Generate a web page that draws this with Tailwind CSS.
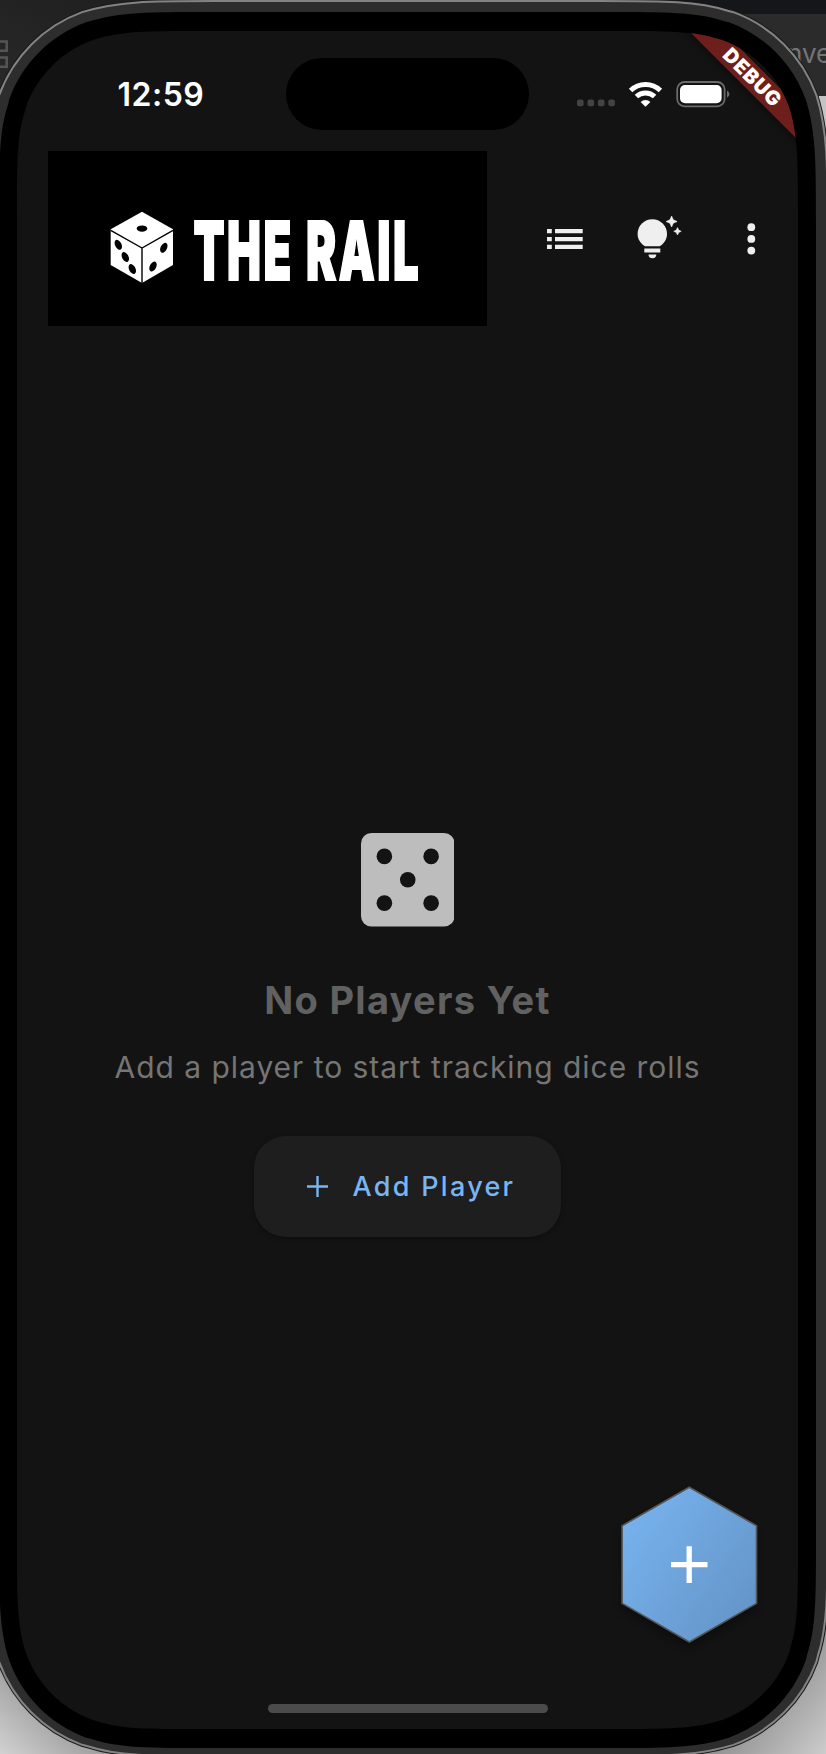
<!DOCTYPE html>
<html lang="en">
<head>
<meta charset="utf-8">
<title>The Rail</title>
<script src="https://cdn.jsdelivr.net/npm/@tailwindcss/browser@4"></script>
</head>
<body class="bg-[#1f1f1f] font-['Inter','Liberation_Sans',sans-serif]">
<div class="relative w-[826px] h-[1754px] overflow-hidden">

  <!-- Desktop and device frame -->
  <svg class="absolute inset-0" width="826" height="1754" viewBox="0 0 826 1754">
    <defs>
      <linearGradient id="tl" x1="0" y1="1" x2="1" y2="0"><stop offset="0" stop-color="#303030"/><stop offset="1" stop-color="#161616"/></linearGradient>
      <linearGradient id="bl" x1="0" y1="1" x2="1" y2="0"><stop offset="0" stop-color="#d2d2d2"/><stop offset=".55" stop-color="#808080"/><stop offset="1" stop-color="#606060"/></linearGradient>
      <linearGradient id="br" x1="1" y1="1" x2="0" y2="0"><stop offset="0" stop-color="#cccccc"/><stop offset=".55" stop-color="#808080"/><stop offset="1" stop-color="#606060"/></linearGradient>
      <clipPath id="screenClip"><path data-box="17,31,781,1698,120"/></clipPath>
      <filter id="rs" x="-20%" y="-20%" width="140%" height="140%"><feGaussianBlur stdDeviation="5"/></filter>
    </defs>
    <rect width="413" height="200" fill="url(#tl)"/>
    <rect x="413" width="413" height="14" fill="#14161a"/>
    <rect x="413" y="14" width="413" height="82" fill="#2b2b2b"/>
    <rect x="700" y="96" width="126" height="1500" fill="#c4c4c4"/>
    <rect y="1620" width="150" height="134" fill="url(#bl)"/>
    <rect x="690" y="1590" width="136" height="164" fill="url(#br)"/>
    <g fill="none" stroke="#555" stroke-width="2.5"><path d="M0 41.5h6.7v9.2H0M0 57.5h6.7v9.2H0"/></g>
    <text x="787" y="62.5" font-size="26" fill="#757575">nve</text>
    <path data-box="-13,0,841.5,1757,150" fill="#2d2d2d" stroke="#1a1a1a" stroke-width="2"/>
    <path data-box="-12,1,839.5,1755,149" fill="#2d2d2d" stroke="#838383" stroke-width="2"/>
    <path data-box="-1,12,817,1736,138" fill="#000"/>
    <path data-box="17,31,781,1698,120" fill="#131313"/>
    <g clip-path="url(#screenClip)">
      <path d="M675 17L825 167L859 167L709 17Z" fill="#000" opacity=".5" filter="url(#rs)"/>
      <path d="M675 17L825 167L859 167L709 17Z" fill="#6e1f1c"/>
      <path d="M709 17L859 167V17Z" fill="#111"/>
      <text transform="translate(752.4 77) rotate(45)" x="0" y="7.3" text-anchor="middle" font-size="20" font-weight="900" textLength="73" fill="#fff">DEBUG</text>
    </g>
  </svg>

  <!-- Screen -->
  <main class="relative ml-[17px] w-[781px] pt-[31px] h-[1729px] flex flex-col">
    <header class="flex h-[120px] shrink-0 pt-[27px]">
      <div class="w-[268.5px] pl-[100.5px] pt-[13.5px] text-[32px] leading-[46px] font-semibold text-white tracking-[0.5px]">12:59</div>
      <div class="w-[243.5px] h-[71.5px] rounded-full bg-black"></div>
      <svg class="ml-[45.5px] mt-[20px]" width="158" height="32" viewBox="575 78 158 32">
        <g fill="#434343"><rect x="577" y="99.5" width="6.6" height="6.8" rx="2"/><rect x="587.5" y="99.5" width="6.6" height="6.8" rx="2"/><rect x="597.9" y="99.5" width="6.6" height="6.8" rx="2"/><rect x="608.3" y="99.5" width="6.6" height="6.8" rx="2"/></g>
        <g fill="none" stroke="#fff" stroke-width="4.9"><path d="M630.6 90.5a21.4 21.4 0 0 1 29.8 0"/><path d="M636.4 96.6a13.2 13.2 0 0 1 18.2 0"/></g>
        <path d="M645.5 106.8l-4.9-4.9a7 7 0 0 1 9.8 0z" fill="#fff"/>
        <rect x="677.2" y="82" width="47.4" height="24.4" rx="7.5" fill="none" stroke="#6b6b6b" stroke-width="1.8"/>
        <rect x="680" y="85" width="41.6" height="18.2" rx="5" fill="#fff"/>
        <path d="M727 90.6q2.4 1.2 2.4 3.6t-2.4 3.6z" fill="#6b6b6b"/>
      </svg>
    </header>

    <nav class="flex h-[176px] shrink-0 pl-[31px]">
      <div class="w-[439px] h-[175px] bg-black">
        <svg width="439" height="175" viewBox="48 151 439 175">
          <path d="M142 211.7L173 229.3V265L142 283L110.7 265V229.3Z" fill="#fff"/>
          <path d="M110.7 230.3L142 248L173 230.3M142 248V283" fill="none" stroke="#000" stroke-width="1.4"/>
          <g fill="#000">
            <ellipse cx="142" cy="228.6" rx="5.3" ry="3.2"/>
            <ellipse cx="118.3" cy="244.8" rx="3.2" ry="5.3" transform="rotate(-27 118.3 244.8)"/>
            <ellipse cx="125.3" cy="257" rx="3.2" ry="5.3" transform="rotate(-27 125.3 257)"/>
            <ellipse cx="132.3" cy="269" rx="3.2" ry="5.3" transform="rotate(-27 132.3 269)"/>
            <ellipse cx="163.8" cy="247.8" rx="3.2" ry="5.3" transform="rotate(27 163.8 247.8)"/>
            <ellipse cx="153" cy="266.5" rx="3.2" ry="5.3" transform="rotate(27 153 266.5)"/>
          </g>
          <text x="193.5" y="279.8" textLength="227.5" lengthAdjust="spacingAndGlyphs" letter-spacing="4.5" word-spacing="1" fill="#fff" stroke="#fff" stroke-width="2.2" font-size="81.5" font-weight="900">THE RAIL</text>
        </svg>
      </div>
      <svg width="294" height="175" viewBox="487 151 294 175" fill="#efefef">
        <path d="M547 229h4.8v4.2H547zM555 229h27.7v4.2H555zM547 237h4.8v4.2H547zM555 237h27.7v4.2H555zM547 244.7h4.8v4.2H547zM555 244.7h27.7v4.2H555z"/>
        <path d="M645 246.3C640.5 243.5 637.6 239 637.6 233.9a14.7 14.7 0 0 1 29.4 0C667 239 664.1 243.5 659.7 246.3z"/>
        <path d="M644.3 248.6h16v4h-16zM648.5 254.6h7.8a3.9 3.6 0 0 1-7.8 0z"/>
        <path d="M671.6 216l1.7 3.8 3.8 1.7-3.8 1.7-1.7 3.8-1.7-3.8-3.8-1.7 3.8-1.7zM677.5 227.6l1.2 2.5 2.5 1.2-2.5 1.2-1.2 2.5-1.2-2.5-2.5-1.2 2.5-1.2z" stroke="#efefef" stroke-width=".6"/>
        <circle cx="751.3" cy="227.2" r="3.9"/><circle cx="751.3" cy="238.9" r="3.9"/><circle cx="751.3" cy="250.6" r="3.9"/>
      </svg>
    </nav>

    <section class="flex flex-col items-center pt-[506px] h-[1157px] shrink-0">
      <svg class="mr-[0.5px]" width="93.5" height="93.5" viewBox="3 3 18 18"><path fill="#bdbdbd" d="M19 3H5a2 2 0 0 0-2 2v14a2 2 0 0 0 2 2h14a2 2 0 0 0 2-2V5a2 2 0 0 0-2-2z"/><g fill="#131313"><circle cx="7.5" cy="7.5" r="1.5"/><circle cx="16.5" cy="7.5" r="1.5"/><circle cx="12" cy="12" r="1.5"/><circle cx="7.5" cy="16.5" r="1.5"/><circle cx="16.5" cy="16.5" r="1.5"/></g></svg>
      <h1 class="mt-[49.5px] text-[38px] leading-[48px] font-bold tracking-[1.3px] text-[#616161] whitespace-nowrap">No Players Yet</h1>
      <p class="mt-[23px] text-[30px] leading-[40px] tracking-[0.96px] text-[#757575] whitespace-nowrap">Add a player to start tracking dice rolls</p>
      <button class="mt-[49px] w-[307px] h-[101px] rounded-[32px] bg-[#1e1e1e] shadow-[0_2px_5px_rgba(0,0,0,0.3)] flex items-center pl-[53px] text-[#79b5f2]">
        <svg width="21" height="21" viewBox="0 0 21 21" stroke="currentColor" stroke-width="2.4"><path d="M10.5 0v21M0 10.5h21"/></svg>
        <span class="ml-[24.5px] pt-px text-[27px] font-medium tracking-[2.3px] whitespace-nowrap">Add Player</span>
      </button>
    </section>

    <div class="flex justify-end pr-[31px] h-[180px] shrink-0">
      <svg width="156" height="180" viewBox="611 1484 156 180">
        <defs><linearGradient id="hx" x1="0" y1=".1" x2="1" y2=".9"><stop offset="0" stop-color="#78b4f0"/><stop offset="1" stop-color="#6393c5"/></linearGradient>
        <filter id="hs" x="-20%" y="-20%" width="140%" height="140%"><feGaussianBlur stdDeviation="4"/></filter></defs>
        <path d="M689.3 1492l67 39v78l-67 39-67-39v-78z" fill="#000" opacity=".3" filter="url(#hs)"/>
        <path d="M689.3 1487.2l67.2 38.6v77.6l-67.2 38.6-67.2-38.6v-77.6z" fill="url(#hx)" stroke="#545759" stroke-width="1.6"/>
        <path d="M689.2 1546.3v36.6M671 1564.6h36.5" stroke="#fff" stroke-width="5.3"/>
      </svg>
    </div>
    <div class="mt-[39.5px] mx-auto w-[280px] h-[9.5px] shrink-0 rounded-full bg-[#4b4b4b]"></div>
  </main>
</div>
<script>
  // Builds continuous-curvature rounded rectangles from x, y, width, height, radius.
  document.querySelectorAll('path[data-box]').forEach(function (p) {
    var b = p.dataset.box.split(',').map(Number), x = b[0], y = b[1], w = b[2], h = b[3], r = b[4];
    var segs = [['c', .44017,0, .66026,0, .85873,.0655], ['l', .03844,.00942], ['c', .25867,.09415, .46243,.29791, .55658,.55658], ['c', .07491,.23691, .07491,.457, .07491,.89717]];
    function corner(t) {
      return segs.map(function (s) {
        var o = s[0];
        for (var i = 1; i < s.length; i += 2) {
          var u = s[i] * r, v = s[i + 1] * r;
          for (var k = 0; k < t; k++) { var q = u; u = -v; v = q; }
          o += ' ' + u.toFixed(2) + ' ' + v.toFixed(2);
        }
        return o;
      }).join('');
    }
    var e = 1.52866 * r;
    p.setAttribute('d', 'M' + (x + e) + ' ' + y + 'h' + (w - 2 * e) + corner(0) + 'v' + (h - 2 * e) + corner(1) + 'h' + (2 * e - w) + corner(2) + 'v' + (2 * e - h) + corner(3) + 'Z');
  });
</script>
</body>
</html>
